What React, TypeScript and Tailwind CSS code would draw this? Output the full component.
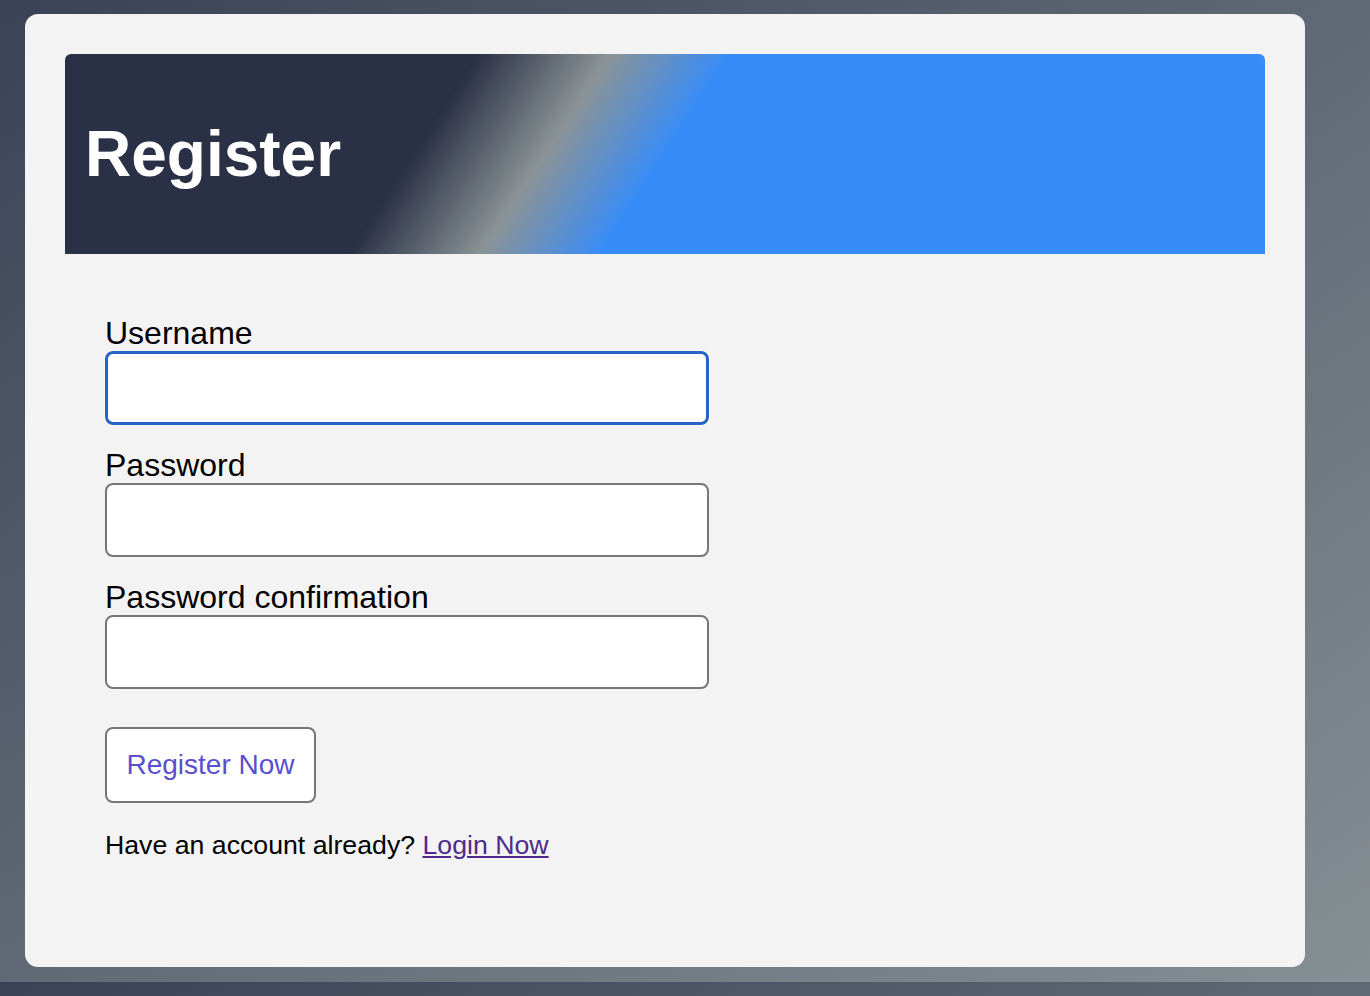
export default function App() {
  const fields = [
    { label: 'Username', type: 'text', focused: true },
    { label: 'Password', type: 'password', focused: false },
    { label: 'Password confirmation', type: 'password', focused: false },
  ];

  return (
    <div className="min-h-screen bg-[linear-gradient(to_bottom_right,#3b4256,#868f94)] bg-[length:100%_982px] bg-repeat pt-[14px] pl-[25px] font-['Liberation_Sans',Arial,sans-serif]">
      <div className="w-[1280px] h-[953px] bg-[#f3f3f3] rounded-[13px] p-[40px]">
        <div className="h-[200px] rounded-t-[6px] bg-[linear-gradient(123deg,#2a3045_31%,#8a9396_41%,#388cf8_50%)] flex items-center pl-[20px]">
          <h1 className="text-white font-bold text-[64px] leading-none">Register</h1>
        </div>

        <form className="pl-[40px] pt-[60px]" onSubmit={(e) => e.preventDefault()}>
          {fields.map((f) => (
            <div key={f.label} className="mb-[21px]">
              <label className="block text-[32px] leading-[37px] pt-[1px] -mb-[1px] text-black">{f.label}</label>
              <input
                type={f.type}
                className={
                  f.focused
                    ? 'block w-[604px] h-[74px] bg-white rounded-[8px] border-[3px] border-[#2563c7] ring-1 ring-white outline-none'
                    : 'block w-[604px] h-[74px] bg-white rounded-[8px] border-2 border-[#767676] outline-none'
                }
              />
            </div>
          ))}

          <button
            type="submit"
            className="mt-[17px] w-[211px] h-[76px] bg-white border-2 border-[#767676] rounded-[8px] text-[28px] text-[#5a4fcf]"
          >
            Register Now
          </button>

          <p className="mt-[27px] text-[26.7px] leading-[30.5px] text-black">
            Have an account already?{' '}
            <a href="#" className="text-[#4f2a8c] underline">
              Login Now
            </a>
          </p>
        </form>
      </div>
    </div>
  );
}
